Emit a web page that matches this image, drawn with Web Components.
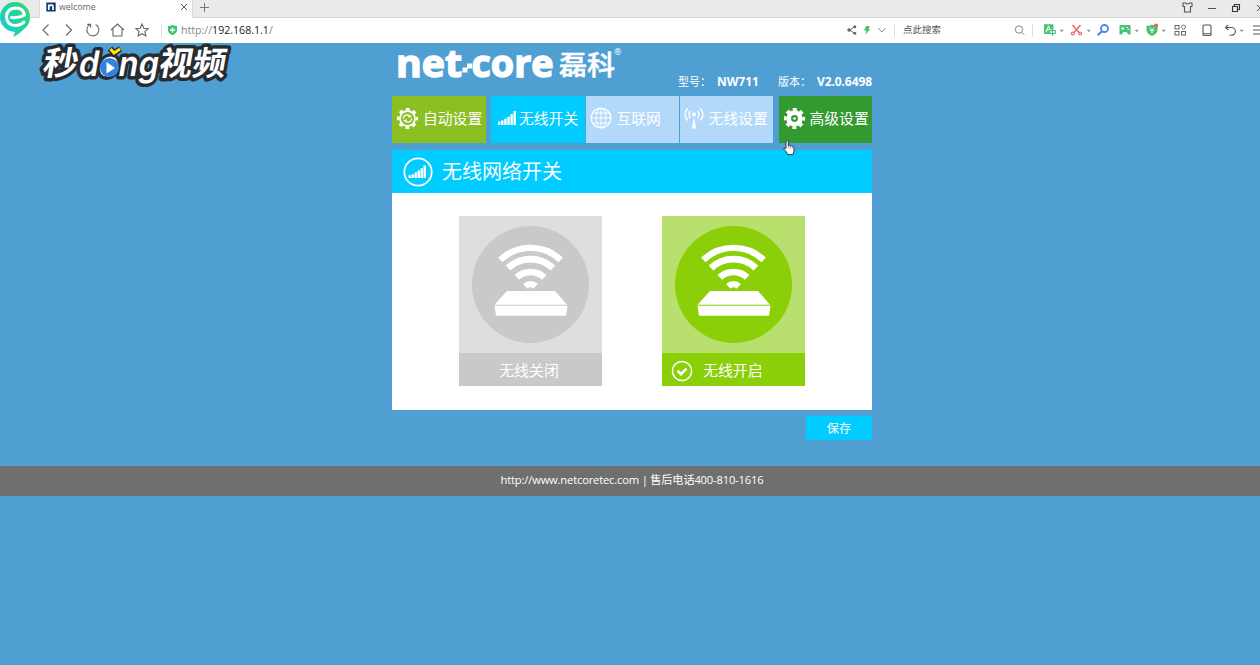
<!DOCTYPE html>
<html lang="zh-CN">
<head>
<meta charset="utf-8">
<title>welcome</title>
<style>
html,body{margin:0;height:100%;overflow:hidden}
body{background:#509fd3;font-family:"Open Sans","Noto Sans CJK SC",sans-serif;color:#fff}
</style>
</head>
<body>
<router-app></router-app>
<script>
const ICONS = {
  back:['0 0 16 16','<path d="M11.500 2.500 6 8l5.500 5.500" fill="none" stroke="#666" stroke-width="1.1"/>'],
  fwd:['0 0 16 16','<path d="M5 2.500 10.500 8 5 13.500" fill="none" stroke="#666" stroke-width="1.1"/>'],
  reload:['0 0 16 16','<path d="M5 2.6A6 6 0 1 0 10.6 2.5M2.2 2.4h3.4v3.4" fill="none" stroke="#666" stroke-width="1.1"/>'],
  home:['0 0 16 16','<path d="M2 8 8.5 2 15 8M4 7v7h9V7" fill="none" stroke="#666" stroke-width="1.1"/>'],
  star:['0 0 16 16','<path d="M9 2l1.8 4.2 4.4.4-3.3 3 1 4.4L9 11.7 5.100 14l1-4.400-3.300-3 4.400-.4z" fill="none" stroke="#666" stroke-width="1.1"/>'],
  safe:['0 0 12 12','<path d="M1 2Q4 2 5.500.800 7 2 10 2v4.500Q9.500 9.500 5.500 11.200 1.500 9.500 1 6.500z" fill="#41c16c"/><path d="M5.500 3.500v5M3 6h5" stroke="#fff" stroke-width="1.300"/>'],
  share:['0 0 16 16','<path d="M11 4.500 5.500 8l5.500 3.500" fill="none" stroke="#666"/><circle cx="5" cy="8" r="1.700" fill="#666"/><circle cx="10.800" cy="4.700" r="1.500" fill="#666"/><circle cx="10.800" cy="11.300" r="1.500" fill="#666"/>'],
  bolt:['0 0 14 16','<path d="M6.200 4h3.600L8.500 7H10l-4.700 6 1-4.400H4z" fill="#3fc56c"/>'],
  chev:['0 0 15 16','<path d="M4 6l3.800 4L11.600 6" fill="none" stroke="#888"/>'],
  search:['0 0 17 16','<circle cx="8" cy="7.500" r="3.700" fill="none" stroke="#888"/><path d="M10.600 10.200l2.700 2.700" stroke="#888"/>'],
  caret:['0 0 7 16','<path d="M1.700 7.700h4L3.700 10z" fill="#888"/>'],
  trans:['0 0 16 16','<path d="M2 2.200h9.500v5.300H8V12H2z" fill="#4cc476"/><path d="M4 10l2.500-6L8.400 9M5 8h3" fill="none" stroke="#fff" stroke-width="1"/><path d="M7.700 8.500h5.500v3H7.700zM10.500 6.500V14" fill="none" stroke="#4cc476" stroke-width="1.200"/>'],
  cut:['0 0 16 16','<path d="M3.500 3l7 8M11.500 3l-7 8" stroke="#f26a64" stroke-width="1.600" fill="none"/><circle cx="3.800" cy="11.500" r="1.400" fill="none" stroke="#f26a64" stroke-width="1.200"/><circle cx="11.200" cy="11.500" r="1.400" fill="none" stroke="#f26a64" stroke-width="1.200"/>'],
  mag:['0 0 16 16','<circle cx="9.500" cy="6.500" r="3.500" fill="none" stroke="#5388e8" stroke-width="1.900"/><path d="M7 9.300l-4.300 4" stroke="#5388e8" stroke-width="2.200"/>'],
  pad:['0 0 16 16','<path d="M3.500 3h9q1 0 1 1v8.500h-2.200L9.500 10h-3l-1.800 2.500H2.500V4q0-1 1-1z" fill="#46c471"/><path d="M4.300 6.500h3M5.800 5v3" stroke="#fff"/><path d="M9.500 5.500H11M10.500 7.500H12" stroke="#fff"/>'],
  guard:['0 0 16 16','<path d="M2.500 3.700Q6 4 8 2.500 10 4 13.500 3.700V8q-.5 4-5.500 6Q3 12 2.500 8z" fill="#45c26e"/><path d="M5.500 5.500L8 8l2.500-2.500M5.800 8.500h4.400M8 8v3.500" stroke="#fff" fill="none"/><circle cx="12" cy="3.600" r="2.100" fill="#f0605a"/>'],
  grid:['0 0 16 16','<g fill="none" stroke="#666"><rect x="3" y="3.500" width="4" height="3.500"/><rect x="3" y="9.500" width="4" height="3.500"/><rect x="9.500" y="9.500" width="4" height="3.500"/><path d="M11.500 2.700l2.300 2.400-2.300 2.300-2.300-2.300z"/></g>'],
  phone:['0 0 16 16','<rect x="4" y="3" width="8" height="10.500" rx="1" fill="none" stroke="#555" stroke-width="1.100"/><path d="M4 11.700h8" stroke="#555"/>'],
  undo:['0 0 16 16','<path d="M5 2.800L2.500 5.600 5.500 8M2.700 5.500H8.500a3.800 3.800 0 0 1 0 7.700H6.500" fill="none" stroke="#555" stroke-width="1.100"/>'],
  menu:['0 0 16 16','<path d="M2 4h12M2 8h12M2 12h12" stroke="#555" stroke-width="1.200"/>'],
  shirt:['0 0 16 16','<path d="M5.500 3Q7.500 5 9.500 3H12v3.500h-1.500V12h-6V6.500H3V3z" fill="none" stroke="#555" stroke-width="1.100"/>'],
  min:['0 0 16 16','<path d="M4 8.500h8" stroke="#555"/>'],
  restore:['0 0 16 16','<path d="M4.500 6.500h5v5h-5zM6.300 6V4.500h5.200v5H10" fill="none" stroke="#333" stroke-width="1.100"/>'],
  close:['0 0 16 16','<path d="M5 5l6 6M11 5l-6 6" stroke="#555" stroke-width="1"/>'],
  plus:['0 0 16 16','<path d="M4 7.500h9M8.500 3v9" stroke="#777"/>'],
  fav:['0 0 10 10','<path d="M.3.500H9.700V9.500H.3z" fill="#133a6d"/><path d="M2.800 8V2.500M2.800 4Q7 1.800 7 5v3" fill="none" stroke="#fff" stroke-width="1.700"/>'],
  auto:['0 0 24 24','<circle cx="12" cy="12" r="7.800" fill="none" stroke="#fff" stroke-width="1.900"/><circle cx="12" cy="12" r="9.700" fill="none" stroke="#fff" stroke-width="2.700" stroke-dasharray="3.900 3.718" stroke-dashoffset="1.950"/><path d="M7.700 12.200Q8 8.200 11.800 8.200q2.200 0 3.600 1.600l-2.900.8M16.300 11.800Q16 15.800 12.200 15.800q-2.200 0-3.600-1.600l2.900-.8" fill="none" stroke="#fff" stroke-width="1.300"/>'],
  gear:['0 0 24 24','<circle cx="12" cy="12" r="6.100" fill="none" stroke="#fff" stroke-width="5"/><circle cx="12" cy="12" r="9.600" fill="none" stroke="#fff" stroke-width="2.900" stroke-dasharray="4.200 3.340" stroke-dashoffset="2.100"/><circle cx="12" cy="12" r="1.400" fill="#fff"/>'],
  bars:['0 0 18 14','<path d="M0 10.500h2.400v3.500H0zM3.100 9.500h2.400V14H3.100zM6.200 7.700h2.400V14H6.200zM9.300 5.800h2.400V14H9.300zM12.400 3h2.400v11h-2.400zM15.500 0h2.400v14h-2.400z" fill="#fff"/>'],
  globe:['0 0 22 22','<g fill="none" stroke="#fff" stroke-width="1"><circle cx="11" cy="11" r="9.800" stroke-width="1.300"/><ellipse cx="11" cy="11" rx="5" ry="9.800"/><path d="M11 1v20M1 11h20M3 6h16M3 16h16"/></g>'],
  tower:['0 0 20 22','<path d="M10 10l2 11.500H8z" fill="#fff"/><circle cx="10" cy="7.500" r="2" fill="#fff"/><g fill="none" stroke="#fff" stroke-width="1.400"><path d="M6.300 4q-2.500 3.500 0 7M13.700 4q2.500 3.500 0 7M3.600 1.500q-5 6 0 12M16.400 1.500q5 6 0 12"/></g>'],
  sign:['0 0 30 30','<circle cx="15" cy="15" r="13.700" fill="none" stroke="#fff" stroke-width="1.800"/><path d="M5.500 18.300h2.400v2.700H5.500zM8.500 17.200h2.400v3.800H8.500zM11.500 15.500h2.400v5.500H11.500zM14.500 13.500h2.400v7.500H14.500zM17.500 11h2.400v10H17.500zM20.500 8.500h2.400v12.500H20.500z" fill="#fff"/>'],
  check:['0 0 22 22','<circle cx="11" cy="11" r="9.600" fill="none" stroke="#fff" stroke-width="1.500"/><path d="M6.500 10.800l3.500 3.400 5.500-5.500" fill="none" stroke="#fff" stroke-width="2.600"/>'],
  hand:['0 0 14 18','<path d="M3.300 10V2.200q1.400-2 2.600 0V7q1.400-1 2.200.3 1.500-.8 2.200.500 1.700-.6 2 1V13l-1.200 4H5.300L3.700 13.800.800 10.800q-.2-2 2.500-.8z" fill="#fff" stroke="#253845" stroke-width="1.100"/><path d="M6 7v3M8.200 7.500V10M10.300 8.300V10.500" stroke="#667" stroke-width=".7"/>'],
  router:['0 0 117 117','<circle cx="58.500" cy="58.500" r="58.500" fill="var(--disc)"/><g fill="none" stroke="#fff"><path d="M28.300 33.900A44.200 44.200 0 0 1 88.700 33.900" stroke-width="6.300"/><path d="M36 42A32.800 32.800 0 0 1 81 42" stroke-width="6.800"/><path d="M44.800 51.400A20 20 0 0 1 72.200 51.400" stroke-width="6.600"/><path d="M53.300 60.300A7.700 7.700 0 0 1 63.700 60.300" stroke-width="6.500"/></g><path d="M35 65H83L95 78.700H22.500zM22.500 79.800h73l-1.500 10H24z" fill="#fff"/>']
};
function define(name, html, after){
  const t = document.createElement('template'); t.innerHTML = html;
  customElements.define(name, class extends HTMLElement{
    constructor(){ super(); this.attachShadow({mode:'open'}).append(t.content.cloneNode(true)); }
    connectedCallback(){ if(after) after(this, this.shadowRoot); }
  });
}
define('ui-icon','<style>:host{display:block;flex:none}svg{display:block;overflow:visible}</style><svg></svg>',(el,r)=>{
  const [box,body]=ICONS[el.getAttribute('name')], s=r.querySelector('svg'), n=box.split(' ');
  s.setAttribute('viewBox',box); s.setAttribute('width',el.getAttribute('w')||n[2]); s.setAttribute('height',el.getAttribute('h')||n[3]); s.innerHTML=body;
});
define('browser-chrome',`<style>
:host{display:block;height:43px;background:#fff;color:#555;overflow:hidden;font-size:9.5px}
.tabs{display:flex;height:18px;background:#eaeaea;box-sizing:border-box;border-bottom:1px solid #d6d6d6;padding-left:39px}
.tab{display:flex;align-items:center;width:154px;height:18px;background:#fff;box-sizing:border-box;padding:0 0 4px 6px;border:solid #d6d6d6;border-width:0 1px}
.tab span{margin-left:3px;flex:1;font-size:8.800px;color:#666}
.win{display:flex;margin-left:auto;margin-right:-8px;gap:8px}
.bar{display:flex;align-items:center;height:24px}
.nav{display:flex;gap:8px;padding-left:37px}
i{display:block;width:1px;height:13px;background:#ddd;flex:none}
.url{margin-left:2px;font-size:10.6px;color:#888;line-height:16px;white-space:nowrap}.url b{font-weight:400;color:#222}
.tools{display:flex;align-items:center;margin-left:auto;width:416px;flex:none}
.q{width:108px;flex:none;margin-left:8px;white-space:nowrap;line-height:14px}
</style>
<div class="tabs"><div class="tab"><ui-icon name="fav"></ui-icon><span>welcome</span><ui-icon name="close"></ui-icon></div><ui-icon name="plus" style="margin-left:3px"></ui-icon>
<div class="win"><ui-icon name="shirt"></ui-icon><ui-icon name="min"></ui-icon><ui-icon name="restore"></ui-icon><ui-icon name="close"></ui-icon></div></div>
<div class="bar"><div class="nav"><ui-icon name="back"></ui-icon><ui-icon name="fwd"></ui-icon><ui-icon name="reload"></ui-icon><ui-icon name="home"></ui-icon><ui-icon name="star"></ui-icon></div>
<i style="margin-left:12px"></i><ui-icon name="safe" style="margin-left:5px"></ui-icon><div class="url">http://<b>192.168.1.1</b>/</div>
<div class="tools"><ui-icon name="share"></ui-icon><ui-icon name="bolt"></ui-icon><ui-icon name="chev"></ui-icon><i style="margin-left:5px"></i><span class="q">点此搜索</span><ui-icon name="search"></ui-icon><i style="margin-left:4px"></i>
<ui-icon name="trans" style="margin-left:9px"></ui-icon><ui-icon name="caret"></ui-icon><ui-icon name="cut" style="margin-left:4px"></ui-icon><ui-icon name="caret"></ui-icon><ui-icon name="mag" style="margin-left:3px"></ui-icon><ui-icon name="pad" style="margin-left:6px"></ui-icon><ui-icon name="caret"></ui-icon><ui-icon name="guard" style="margin-left:4px"></ui-icon><ui-icon name="caret"></ui-icon><ui-icon name="grid" style="margin-left:5px"></ui-icon><ui-icon name="phone" style="margin-left:11px"></ui-icon><ui-icon name="undo" style="margin-left:8px"></ui-icon><ui-icon name="caret" style="margin-left:-1px"></ui-icon><ui-icon name="menu" style="margin-left:6px"></ui-icon></div></div>`);
define('browser-badge',`<style>:host{position:absolute;left:0;top:0}svg{display:block}</style>
<svg width="32" height="38"><defs><linearGradient id="g" x1="0" y1="1" x2="1" y2="0"><stop offset="0" stop-color="#22c6e8"/><stop offset=".5" stop-color="#1fd3a4"/><stop offset="1" stop-color="#2edb62"/></linearGradient></defs>
<path d="M15 2a15 15 0 0 1 15 15c0 6-3 10-7 13-3 3-6 5-10 7l2-5A15 15 0 1 1 15 2z" fill="url(#g)"/>
<path d="M11.500 17.500Q19 18.500 24.500 15 23.500 8 15.500 8 6.500 8.500 6.500 17 7 25.500 15.500 25.500q5 0 8.500-3.300" fill="none" stroke="#fff" stroke-width="3" stroke-linecap="round"/></svg>`);
define('video-mark',`<style>:host{position:absolute;left:36px;top:25px}svg{display:block}text{font-weight:700;fill:#fff;stroke:#272c31;stroke-width:7px;paint-order:stroke;stroke-linejoin:round}.c{font-family:"Noto Sans CJK SC",sans-serif;font-size:33px}.l{font-family:Inter,sans-serif;font-weight:600;font-size:35px}</style>
<svg width="206" height="80"><g transform="translate(6.500 15) skewX(-10)">
<text class="c" x="5" y="34.500" textLength="35" lengthAdjust="spacingAndGlyphs">秒</text><text class="c" x="121" y="34.500" textLength="67" lengthAdjust="spacingAndGlyphs">视频</text><text class="l" x="41" y="36" textLength="80" lengthAdjust="spacingAndGlyphs">dong</text></g>
<g transform="translate(0 15)"><circle cx="73.500" cy="27.500" r="9.500" fill="#3481df"/><path d="M70.500 22v11.500l8.500-5.500z" fill="#fff"/><path d="M74 8.500l4 4.500 6.500-4" fill="none" stroke="#272c31" stroke-width="6"/><path d="M74.500 9l3.500 4 6-4" fill="none" stroke="#ffe900" stroke-width="3"/></g></svg>`);
define('brand-header',`<style>:host{display:flex;justify-content:space-between;height:53px}svg{display:block;flex:none;margin-top:-20px}
text{fill:#fff}.n{font:700 37px "Open Sans",sans-serif;stroke:#fff;stroke-width:1.400px}.z{font:500 27px "Noto Sans CJK SC",sans-serif;stroke:#fff;stroke-width:.5px}.r{font:9px "Open Sans","Noto Sans",sans-serif}
.info{display:flex;align-self:flex-end;font-size:11px;line-height:16px;margin-bottom:6px;white-space:nowrap}.info b{font-size:12px;font-weight:700}.a{width:39px}.b{width:61px}.c{width:39px}</style>
<svg width="240" height="73"><text class="n" x="4" y="53.500" textLength="66" lengthAdjust="spacingAndGlyphs">net</text><path d="M70.500 44.500h5v5h-5zM75 40.500h5v5h-5z" fill="#fff"/><text class="n" x="79.500" y="53.500" textLength="82" lengthAdjust="spacingAndGlyphs">core</text><text class="z" x="167" y="52" textLength="56" lengthAdjust="spacingAndGlyphs">磊科</text><text class="r" x="222" y="31.500">®</text></svg>
<div class="info"><span class="a">型号：</span><b class="b">NW711</b><span class="c">版本：</span><b style="width:55px;letter-spacing:-.1px">V2.0.6498</b></div>`);
define('nav-tile',`<style>:host{display:flex;align-items:center;box-sizing:border-box;height:47px;padding-bottom:4px;font-size:14.8px;line-height:20px;white-space:nowrap;background:var(--bg)}.i{display:flex;justify-content:center;padding-top:1px;width:var(--iw,31px)}</style><div class="i"><slot name="icon"></slot></div><slot></slot>`);
define('main-nav',`<style>:host{display:grid;height:47px;grid-template-columns:93.500px 5.500px 94px .5px 93px 1px 93.500px 5.500px 93.500px}
nav-tile:nth-of-type(1){grid-column:1}nav-tile:nth-of-type(2){grid-column:3}nav-tile:nth-of-type(3){grid-column:5}nav-tile:nth-of-type(4){grid-column:7}nav-tile:nth-of-type(5){grid-column:9}</style>
<nav-tile style="--bg:#8bbf22"><ui-icon slot="icon" name="auto" w="23" h="23"></ui-icon>自动设置</nav-tile>
<nav-tile style="--bg:#00ccff;--iw:28px"><ui-icon slot="icon" name="bars" style="margin-left:3px"></ui-icon>无线开关</nav-tile>
<nav-tile style="--bg:#b3d9fa"><ui-icon slot="icon" name="globe" style="margin-right:1px"></ui-icon>互联网</nav-tile>
<nav-tile style="--bg:#b3d9fa;--iw:29px"><ui-icon slot="icon" name="tower"></ui-icon>无线设置</nav-tile>
<nav-tile style="--bg:#339a30"><ui-icon slot="icon" name="gear" w="23" h="23"></ui-icon>高级设置</nav-tile>`);
define('wifi-card',`<style>:host{display:block;width:143px;height:170px;background:var(--tile)}.top{display:flex;justify-content:center;padding-top:10px;height:127px}
.cap{height:33px;background:var(--disc);display:flex;align-items:center;justify-content:center;font-size:14.900px;line-height:20px;padding:1px 2px 0 0;box-sizing:border-box}
:host([on]) .cap{justify-content:flex-start;padding-left:9.500px}ui-icon.k{display:none;margin-right:10px;margin-top:2px}:host([on]) .k{display:block}</style>
<div class="top"><ui-icon name="router"></ui-icon></div><div class="cap"><ui-icon class="k" name="check"></ui-icon><slot></slot></div>`);
define('switch-panel',`<style>:host{display:block;margin-top:7px}.h{height:43px;background:#00ccff;display:flex;align-items:center;gap:9px;padding-left:11px;font-size:20px;line-height:28px}
.b{height:217px;background:#fff;display:flex;gap:60px;padding:23px 0 0 66.500px;box-sizing:border-box}</style>
<div class="h"><ui-icon name="sign"></ui-icon><span>无线网络开关</span></div><div class="b"><wifi-card style="--tile:#dedede;--disc:#c9c9c9">无线关闭</wifi-card><wifi-card on style="--tile:#b9e06f;--disc:#8bcf09">无线开启</wifi-card></div>`);
define('save-button',`<style>:host{display:flex;justify-content:center;align-items:center;width:66px;height:23.500px;margin:6px 0 0 auto;background:#00ccff;font-size:12.200px;line-height:16px;padding-top:2px;box-sizing:border-box}</style><slot></slot>`);
define('page-footer',`<style>:host{display:flex;justify-content:center;align-items:center;height:30px;margin-top:26.500px;background:#6f6f6f;font-size:11.200px;letter-spacing:-.18px;line-height:16px;padding:0 0 2px 4px;white-space:nowrap;box-sizing:border-box}</style><slot></slot>`);
define('hand-pointer',`<style>:host{position:absolute;left:782.500px;top:139px}</style><ui-icon name="hand" w="12.500" h="17"></ui-icon>`);
define('router-app',`<style>:host{display:block;position:relative;height:665px}main{width:480px;margin-left:392px}</style>
<browser-chrome></browser-chrome><main><brand-header></brand-header><main-nav></main-nav><switch-panel></switch-panel><save-button>保存</save-button></main>
<page-footer>http://www.netcoretec.com | 售后电话400-810-1616</page-footer><browser-badge></browser-badge><video-mark></video-mark><hand-pointer></hand-pointer>`);
</script>
</body>
</html>
